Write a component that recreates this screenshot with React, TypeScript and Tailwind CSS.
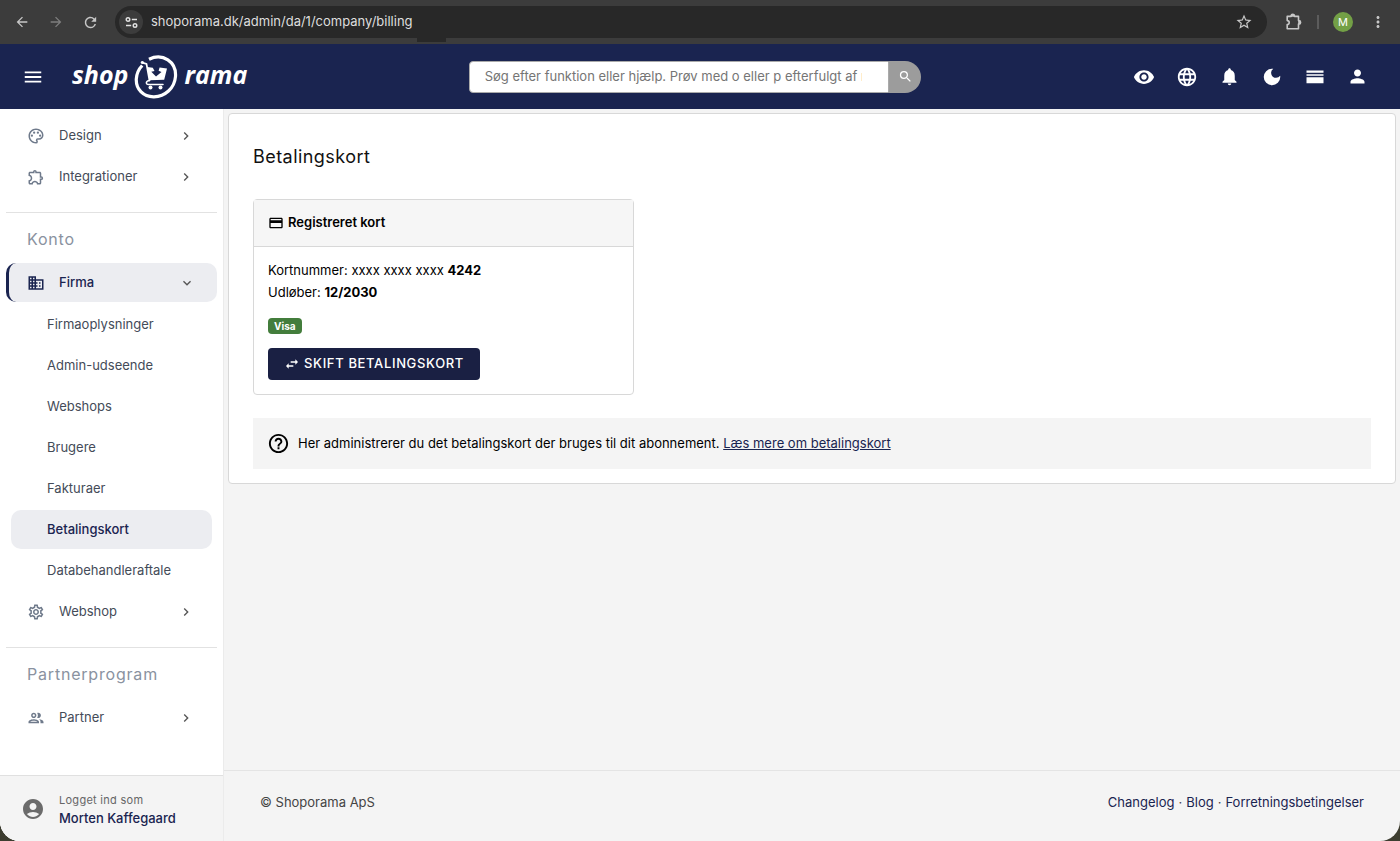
import {
  MdAccountCircle,
  MdArrowBack,
  MdArrowForward,
  MdBusiness,
  MdChevronRight,
  MdCreditCard,
  MdDarkMode,
  MdExpandMore,
  MdHelpOutline,
  MdLanguage,
  MdMenu,
  MdMoreVert,
  MdNotifications,
  MdOutlineExtension,
  MdOutlineGroup,
  MdOutlinePalette,
  MdOutlineSettings,
  MdPerson,
  MdRefresh,
  MdSearch,
  MdStarBorder,
  MdSwapHoriz,
  MdVisibility,
} from 'react-icons/md'
import type { IconType } from 'react-icons'

const companyLinks = [
  'Firmaoplysninger',
  'Admin-udseende',
  'Webshops',
  'Brugere',
  'Fakturaer',
  'Betalingskort',
  'Databehandleraftale',
]

const footerLinks = ['Changelog', 'Blog', 'Forretningsbetingelser']

const TuneIcon = () => (
  <svg width="13" height="13" viewBox="0 0 13 13" fill="none" stroke="currentColor" strokeWidth="1.4">
    <circle cx="3" cy="3.5" r="1.8" />
    <path d="M6.8 3.5H12M1 9.5h5.2" />
    <circle cx="10" cy="9.5" r="1.8" />
  </svg>
)

const PuzzleIcon = () => (
  <svg width="18" height="18" viewBox="0 0 18 18" fill="none" stroke="currentColor" strokeWidth="1.6" strokeLinejoin="round">
    <path d="M2.2 3.4h3.9a1.7 1.7 0 0 1 3.4 0h4v4.2a1.7 1.7 0 0 1 0 3.4v4.8H2.2v-4.2a2 2 0 0 0 0-4z" />
    <path d="M6.2 3a1.6 1.6 0 0 1 3.2 0zM14 7.8a1.6 1.6 0 0 1 0 3.2z" fill="currentColor" />
  </svg>
)

const StreamIcon = () => (
  <svg width="18" height="14" viewBox="0 0 18 14" fill="currentColor">
    <path d="M.5.5h17v2.2H.5zM.5 4.2h17v1.6H.5zM.5 7.3h17v6H.5z" />
  </svg>
)

const Logo = () => (
  <a href="#" aria-label="shoporama" className="flex items-center font-['Open_Sans'] text-[25px] font-bold italic text-white">
    <span className="pb-1">shop</span>
    <svg className="mx-1.5" width="44" height="44" viewBox="0 0 44 44" fill="none" stroke="white">
      <path d="M15 4.2C29-2.5 42.5 7 41.5 21.5C40.5 33.5 31 41.5 20 41.8C9 42 1.8 34 2.3 24C2.6 18.5 4.8 14 8.2 10.5" strokeWidth="3.2" />
      <path d="M7.5 7.4L12.5 9L15.5 25.5" strokeWidth="1.7" strokeLinecap="round" />
      <circle cx="8.5" cy="7.5" r="1.5" fill="white" stroke="none" />
      <path d="M13.3 12L18.8 12.8L20.5 16L17.3 16.8L22 21.6L27.5 17L24.6 15.7L25.6 12.5L33 13.5L30.2 24.7L15.5 25.2Z" fill="white" stroke="none" />
      <path d="M15.5 25.5C11.5 26 11.5 29.5 14.5 29.5H29" strokeWidth="1.5" strokeLinecap="round" />
      <circle cx="16.5" cy="32.5" r="2" fill="white" stroke="none" />
      <circle cx="26.5" cy="32.5" r="2" fill="white" stroke="none" />
    </svg>
    <span className="pb-1">rama</span>
  </a>
)

const BrowserBar = () => (
  <div className="relative flex h-11 items-center bg-[#3c3c3c] pl-3.5 pr-[13px] text-[#c7c7c7]">
    <button aria-label="Tilbage" className="mr-[18px]"><MdArrowBack size={16} /></button>
    <button aria-label="Frem" className="mr-[18px] text-[#7e7e7e]"><MdArrowForward size={16} /></button>
    <button aria-label="Genindlæs" className="mr-4"><MdRefresh size={17} /></button>
    <div className="flex h-8 flex-1 items-center gap-2 rounded-full bg-[#282828] pl-1 pr-3.5">
      <button aria-label="Webstedsoplysninger" className="grid size-6 place-items-center rounded-full bg-[#3c3c3c] text-[#e3e3e3]">
        <TuneIcon />
      </button>
      <input
        aria-label="Adresse"
        defaultValue="shoporama.dk/admin/da/1/company/billing"
        className="min-w-0 flex-1 bg-transparent text-[13px] text-[#dedede] outline-none"
      />
      <button aria-label="Bogmærk"><MdStarBorder size={18} /></button>
    </div>
    <div className="absolute left-[417px] top-9 h-1.5 w-[29px] bg-[#282828]" />
    <button aria-label="Udvidelser" className="ml-[18px]"><PuzzleIcon /></button>
    <span className="mx-3.5 h-3.5 w-0.5 bg-[#5c5c5c]" />
    <button aria-label="Profil" className="size-5 rounded-full bg-[#73a046] text-[11px] text-white">M</button>
    <button aria-label="Menu" className="ml-4"><MdMoreVert size={18} /></button>
  </div>
)

const TopBar = () => (
  <header className="flex h-[65px] items-center justify-between bg-[#1a2450] pl-[22px] pr-8 text-white">
    <div className="flex w-[447px] items-center gap-7">
      <button aria-label="Menu"><MdMenu size={22} /></button>
      <Logo />
    </div>
    <form className="flex w-[453px]" onSubmit={(e) => e.preventDefault()}>
      <div className="flex h-8 flex-1 rounded-l border border-[#aaa] bg-white pl-[15px] pr-[26px]">
        <input
          type="text"
          aria-label="Søg"
          placeholder="Søg efter funktion eller hjælp. Prøv med o eller p efterfulgt af mellemrum"
          className="w-full text-[13px] text-black outline-none placeholder:text-[#757575]"
        />
      </div>
      <button aria-label="Søg nu" className="grid h-8 w-8 place-items-center rounded-r-full bg-[#9c9c9c]">
        <MdSearch size={15} />
      </button>
    </form>
    <nav className="flex w-[447px] items-center justify-end gap-[21px]">
      <button aria-label="Vis"><MdVisibility size={22} /></button>
      <button aria-label="Sprog"><MdLanguage size={22} /></button>
      <button aria-label="Notifikationer"><MdNotifications size={21} /></button>
      <button aria-label="Mørk tilstand"><MdDarkMode size={22} /></button>
      <button aria-label="Visning" className="px-0.5"><StreamIcon /></button>
      <button aria-label="Bruger"><MdPerson size={21} /></button>
    </nav>
  </header>
)

const NavItem = ({ icon: Icon, label, open }: { icon: IconType; label: string; open?: boolean }) => (
  <a
    href="#"
    className={
      open
        ? 'flex h-[39px] items-center rounded-[10px] border-l-[3px] border-[#1a2450] bg-[#ecedf1] pl-[18px] pr-[22px] font-medium text-[#1a2450]'
        : 'flex h-[39px] items-center pl-[21px] pr-[23px] text-[#444b58]'
    }
  >
    <Icon size={18} className={open ? '' : 'text-[#6f7a8b]'} />
    <span className="ml-3.5 flex-1">{label}</span>
    {open ? <MdExpandMore size={16} className="text-[#555]" /> : <MdChevronRight size={16} className="text-[#555]" />}
  </a>
)

const NavHeading = ({ children }: { children: string }) => (
  <h2 className="mt-3.5 flex h-[49px] items-center border-t border-[#e2e2e2] pl-[21px] pt-1 text-base tracking-wider text-[#8a92a0]">
    {children}
  </h2>
)

const Sidebar = () => (
  <aside className="flex w-[224px] shrink-0 flex-col border-r border-[#ebebeb] bg-white">
    <nav className="flex flex-col gap-0.5 px-1.5 pt-[7px] text-[13px]">
      <NavItem icon={MdOutlinePalette} label="Design" />
      <NavItem icon={MdOutlineExtension} label="Integrationer" />
      <NavHeading>Konto</NavHeading>
      <NavItem icon={MdBusiness} label="Firma" open />
      <ul className="flex flex-col gap-0.5 px-[5px] pt-px">
        {companyLinks.map((label) => (
          <li key={label}>
            <a
              href="#"
              className={
                label === 'Betalingskort'
                  ? 'flex h-[39px] items-center rounded-[10px] bg-[#ecedf1] pl-9 font-medium text-[#1a2450]'
                  : 'flex h-[39px] items-center pl-9 text-[#444b58]'
              }
            >
              {label}
            </a>
          </li>
        ))}
      </ul>
      <NavItem icon={MdOutlineSettings} label="Webshop" />
      <NavHeading>Partnerprogram</NavHeading>
      <NavItem icon={MdOutlineGroup} label="Partner" />
    </nav>
    <div className="mt-auto flex h-[66px] items-center gap-3.5 border-t border-[#e0e0e0] bg-[#f4f4f4] pl-[21px]">
      <MdAccountCircle size={24} className="text-[#6b6b6b]" />
      <div className="leading-[18px]">
        <p className="text-[11px] tracking-wide text-[#666]">Logget ind som</p>
        <a href="#" className="block text-[13px] font-medium text-[#1a2450]">Morten Kaffegaard</a>
      </div>
    </div>
  </aside>
)

const CardPanel = () => (
  <section className="w-[381px] max-w-full rounded border border-[#d8d8d8]">
    <h2 className="flex h-[47px] items-center gap-1 border-b border-[#d8d8d8] bg-[#f6f6f6] pl-3.5 text-[13px] font-semibold text-black">
      <MdCreditCard size={16} />
      Registreret kort
    </h2>
    <div className="px-3.5 pb-3.5 pt-3 text-[13px]">
      <p className="leading-[22px]">
        Kortnummer: xxxx xxxx xxxx <b>4242</b>
        <br />
        Udløber: <b>12/2030</b>
      </p>
      <span className="mt-[15px] flex h-4 w-fit items-center rounded bg-[#437d3c] px-1.5 text-[10px] font-bold text-white">
        Visa
      </span>
      <button className="mt-3.5 flex h-8 items-center gap-1 rounded bg-[#1a2043] px-4 font-medium uppercase tracking-wider text-white">
        <MdSwapHoriz size={16} />
        Skift betalingskort
      </button>
    </div>
  </section>
)

export default function App() {
  return (
    <div className="min-h-screen bg-[#3d3d30] font-[Inter,sans-serif]">
      <div className="flex min-h-screen flex-col overflow-hidden rounded-b-[20px] bg-[#f4f4f4]">
        <BrowserBar />
        <TopBar />
        <div className="flex flex-1">
          <Sidebar />
          <div className="flex min-w-0 flex-1 flex-col">
            <main className="m-1 rounded border border-[#d8d8d8] bg-white px-6 pb-3.5 pt-[29px]">
              <h1 className="mb-7 text-lg leading-7 tracking-wide text-[#111]">Betalingskort</h1>
              <CardPanel />
              <div className="mt-[23px] flex h-[51px] items-center gap-2 bg-[#f4f4f4] pl-3.5 text-[13px]">
                <MdHelpOutline size={23} />
                <p>
                  Her administrerer du det betalingskort der bruges til dit abonnement.{' '}
                  <a href="#" className="text-[#1a2450] underline">Læs mere om betalingskort</a>
                </p>
              </div>
            </main>
            <footer className="mt-auto flex h-[71px] items-start justify-between border-t border-[#e4e4e4] pl-9 pr-9 pt-[22px] text-[13px] text-[#444]">
              <p>© Shoporama ApS</p>
              <p className="flex gap-1">
                {footerLinks.map((label, i) => (
                  <span key={label} className="flex gap-1">
                    {i > 0 && <span>·</span>}
                    <a href="#" className="text-[#1a2450]">{label}</a>
                  </span>
                ))}
              </p>
            </footer>
          </div>
        </div>
      </div>
    </div>
  )
}
